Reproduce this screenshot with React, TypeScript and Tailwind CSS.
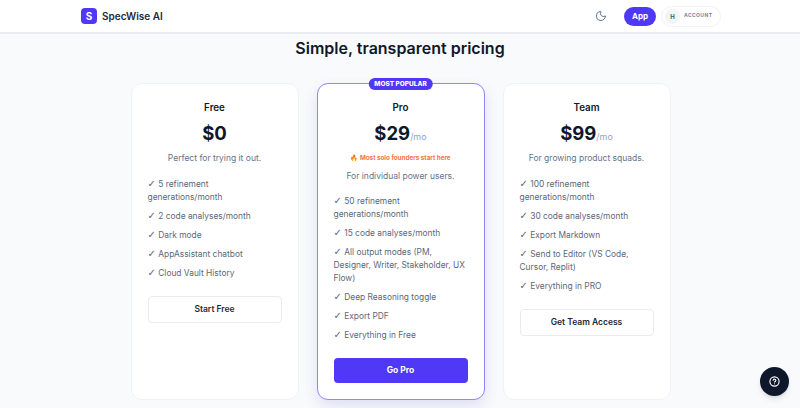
import { CircleHelp, Moon } from "lucide-react";

type Plan = {
  name: string;
  price: string;
  per?: boolean;
  note?: string;
  desc: string;
  features: string[];
  cta: string;
  featured?: boolean;
};

const plans: Plan[] = [
  {
    name: "Free",
    price: "$0",
    desc: "Perfect for trying it out.",
    features: ["5 refinement generations/month", "2 code analyses/month", "Dark mode", "AppAssistant chatbot", "Cloud Vault History"],
    cta: "Start Free",
  },
  {
    name: "Pro",
    price: "$29",
    per: true,
    note: "Most solo founders start here",
    desc: "For individual power users.",
    features: [
      "50 refinement generations/month",
      "15 code analyses/month",
      "All output modes (PM, Designer, Writer, Stakeholder, UX Flow)",
      "Deep Reasoning toggle",
      "Export PDF",
      "Everything in Free",
    ],
    cta: "Go Pro",
    featured: true,
  },
  {
    name: "Team",
    price: "$99",
    per: true,
    desc: "For growing product squads.",
    features: [
      "100 refinement generations/month",
      "30 code analyses/month",
      "Export Markdown",
      "Send to Editor (VS Code, Cursor, Replit)",
      "Everything in PRO",
    ],
    cta: "Get Team Access",
  },
];

function PlanCard({ plan }: { plan: Plan }) {
  return (
    <div
      className={
        plan.featured
          ? "relative w-[168px] rounded-[11px] border border-[#8f86f7] bg-white px-[16px] pt-[17px] shadow-[0_6px_14px_rgba(80,70,200,0.14)]"
          : "relative w-[168px] rounded-[11px] border border-[#f0f2f6] bg-white px-[16px] pt-[17px]"
      }
    >
      {plan.featured && (
        <div className="absolute left-1/2 top-[-6px] -translate-x-1/2 whitespace-nowrap rounded-full bg-[#4f39f6] px-[6px] text-[6.5px] leading-[12px] font-extrabold text-white">
          MOST POPULAR
        </div>
      )}
      <div className="text-center text-[9.8px] leading-[14px] font-semibold text-[#111827]">{plan.name}</div>
      <div className="mt-[5px] flex items-baseline justify-center">
        <span className="text-[18.5px] leading-[26px] font-bold text-[#0f172a]">{plan.price}</span>
        {plan.per && <span className="text-[9px] text-[#94a3b8]">/mo</span>}
      </div>
      {plan.note && (
        <div className="mt-[6px] text-center text-[6.3px] leading-[12px] font-bold text-[#f97342]">🔥 {plan.note}</div>
      )}
      <div className="mt-[6px] text-center text-[8.5px] leading-[13px] text-[#64748b]">{plan.desc}</div>
      <ul className={`${plan.note ? "mt-[12px]" : "mt-[13px]"} flex flex-col gap-[6px]`}>
        {plan.features.map((f) => (
          <li key={f} className="text-[8.4px] leading-[13px] text-[#5c6779]">
            <span className="font-['DejaVu_Sans',sans-serif] text-[10px] leading-none">✓</span> {f}
          </li>
        ))}
      </ul>
      <button
        className={
          plan.featured
            ? "mt-[16px] h-[25px] w-full rounded-[4px] bg-[#4f39f6] text-[8.5px] font-bold text-white"
            : "mt-[16px] h-[27px] w-full rounded-[4px] border border-[#e8ebf0] bg-white text-[8.5px] font-semibold text-[#1e293b]"
        }
      >
        {plan.cta}
      </button>
    </div>
  );
}

export default function App() {
  return (
    <div className="relative h-[408px] w-[800px] overflow-hidden bg-[#f8fafc] font-['Inter',sans-serif]">
      <header className="flex h-[34px] items-center justify-between border-b-2 border-[#e9ecf1] bg-white pl-[81px] pr-[79px]">
        <div className="flex items-center gap-[5px]">
          <div className="flex size-[16px] items-center justify-center rounded-[4px] bg-[#4f39f6] text-[10px] font-bold text-white">
            S
          </div>
          <span className="text-[10px] font-semibold text-[#1e293b]">SpecWise AI</span>
        </div>
        <div className="flex items-center">
          <Moon size={12} className="mr-[17px] text-[#64748b]" />
          <div className="flex h-[19px] w-[32px] items-center justify-center rounded-full bg-[#4f39f6] text-[8px] font-bold text-white">
            App
          </div>
          <div className="ml-[5px] flex h-[21px] w-[60px] items-center gap-[4px] rounded-full border border-[#f1f3f7] pl-[3px]">
            <div className="flex size-[15px] items-center justify-center rounded-full bg-[#f1f5f9] text-[6px] font-bold text-[#475569]">
              H
            </div>
            <span className="text-[5px] font-bold tracking-[0.08em] text-[#7c8797]">ACCOUNT</span>
          </div>
        </div>
      </header>
      <h1 className="mt-[3px] text-center text-[16px] leading-[22px] font-semibold text-[#0f172a]">Simple, transparent pricing</h1>
      <div className="mt-[24px] flex h-[317px] justify-center gap-[18px] pl-[1px]">
        {plans.map((p) => (
          <PlanCard key={p.name} plan={p} />
        ))}
      </div>
      <button className="absolute bottom-[12px] right-[11px] flex size-[29px] items-center justify-center rounded-full bg-[#0f172a] text-white shadow-md">
        <CircleHelp size={11} strokeWidth={2.5} />
      </button>
    </div>
  );
}
